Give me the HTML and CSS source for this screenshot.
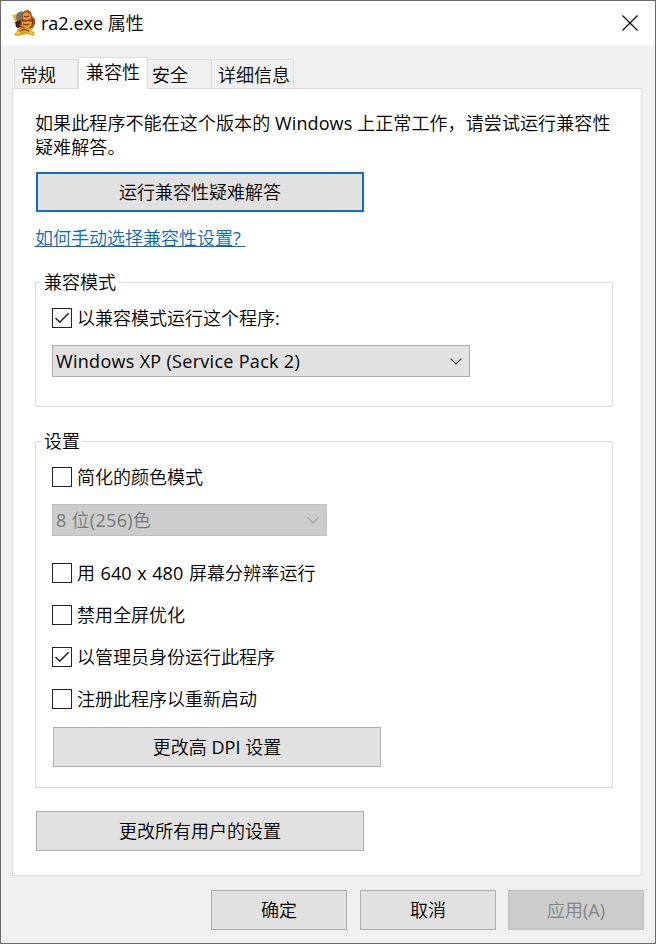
FILE: index.html
```html
<!DOCTYPE html>
<html lang="zh-CN">
  <head>
    <meta charset="utf-8">
    <title>ra2.exe 属性</title>
    <link rel="stylesheet" href="styles.css">
  </head>
  <body>
    <div class="window">
      <header class="titlebar">
        <svg class="app-icon" width="25" height="26" viewBox="0 0 25 26">
          <path d="M1 5l6-1 3 4-3 4-3-1z" fill="#e3b21c"/>
          <path d="M6 3l5-2 3 3-2 8-5 1-2-5z" fill="#77726b"/>
          <path d="M4 12l5-2 3 5-3 4-4-2z" fill="#3a1d2c"/>
          <path d="M11 4l2-3 4-1 3 2 1 4 3 3v5l-2 4-5 2-6-1-3-4 3-4z" fill="#a8501a"/>
          <path d="M12 4l3-2 4 2 1 4-3 3-5-2zM11 12l4-1 6 1-1 4-5 2-4-2z" fill="#e39a35"/>
          <path d="M8 17l4 1 6-1 2 3 4 3-2 3-5-2-5 1-6 1-3-1 3-4z" fill="#dfa51e"/>
          <path d="M13 6l2 1 3-1M11 10l3 1 5-1M12 14l3 1 3-1M9 21l4-2 5 2M21 9l1 5" fill="none" stroke="#6d2c12" stroke-width="1.1"/>
          <path d="M5 24l4-2M19 22l3 2" stroke="#f6d83c" stroke-width="1.5"/>
        </svg>
        <h1>ra2.exe 属性</h1>
        <svg class="close" width="16" height="16" viewBox="0 0 16 16">
          <path d="M.5.5l15 15M15.5.5l-15 15" stroke="#000" stroke-width="1.1"/>
        </svg>
      </header>

      <nav class="tabs">
        <a class="tab general">常规</a>
        <a class="tab active">兼容性</a>
        <a class="tab security">安全</a>
        <a class="tab details">详细信息</a>
      </nav>

      <main class="panel">
        <p class="intro">如果此程序不能在这个版本的 Windows 上正常工作，请尝试运行兼容性疑难解答。</p>
        <button class="btn wide default">运行兼容性疑难解答</button>
        <a class="help">如何手动选择兼容性设置?&nbsp;</a>

        <fieldset class="mode">
          <legend>兼容模式</legend>
          <label class="check">
            <span class="box"><svg width="18" height="18" viewBox="0 0 18 18"><path d="M2.5 9l4.2 4.2 9-9"/></svg></span>
            以兼容模式运行这个程序:
          </label>
          <div class="select">
            <span>Windows XP (Service Pack 2)</span>
            <svg width="12" height="7" viewBox="0 0 12 7"><path d="M.7.7L6 6 11.3.7"/></svg>
          </div>
        </fieldset>

        <fieldset class="settings">
          <legend>设置</legend>
          <label class="check"><span class="box"></span>简化的颜色模式</label>
          <div class="select disabled">
            <span>8 位(256)色</span>
            <svg width="12" height="7" viewBox="0 0 12 7"><path d="M.7.7L6 6 11.3.7"/></svg>
          </div>
          <div class="options">
            <label class="check resolution"><span class="box"></span>用 640 x 480 屏幕分辨率运行</label>
            <label class="check"><span class="box"></span>禁用全屏优化</label>
            <label class="check">
              <span class="box"><svg width="18" height="18" viewBox="0 0 18 18"><path d="M2.5 9l4.2 4.2 9-9"/></svg></span>
              以管理员身份运行此程序
            </label>
            <label class="check"><span class="box"></span>注册此程序以重新启动</label>
          </div>
          <button class="btn wide">更改高 DPI 设置</button>
        </fieldset>

        <button class="btn wide">更改所有用户的设置</button>
      </main>

      <footer class="footer">
        <button class="btn ok">确定</button>
        <button class="btn">取消</button>
        <button class="btn" disabled>应用(A)</button>
      </footer>
    </div>
  </body>
</html>
```
FILE: styles.css
```css
* {
  box-sizing: border-box;
}

body {
  margin: 0;
  font-family: "Open Sans", "Noto Sans CJK SC DemiLight", "Noto Sans CJK SC", sans-serif;
  font-size: 18px;
  line-height: 24px;
  color: #000;
}

.window {
  width: 656px;
  height: 944px;
  border: 1px solid #6b696b;
  background: #f0f0f0;
  overflow: hidden;
}

.titlebar {
  display: flex;
  align-items: center;
  height: 44px;
  padding: 0 17px 1px 10px;
  background: #fff;
}

.titlebar h1 {
  flex: 1;
  margin: 0 0 0 5px;
  font-size: 18px;
  font-weight: inherit;
}

.tabs {
  display: flex;
  align-items: flex-end;
  height: 43px;
  padding-left: 13px;
}

.tab {
  height: 29px;
  padding: 3px 0 0 5px;
  border: 1px solid #dcdcdc;
  border-bottom: none;
  border-left: none;
  white-space: nowrap;
}

.general {
  width: 64px;
  border-left: 1px solid #dcdcdc;
}

.security {
  width: 64px;
  padding-left: 4px;
}

.details {
  width: 82px;
  padding-left: 6px;
}

.tab.active {
  width: 70px;
  height: 32px;
  margin-bottom: -1px;
  padding: 2px 0 0 7px;
  border-left: 1px solid #dcdcdc;
  background: #fff;
  z-index: 1;
}

.panel {
  width: 630px;
  height: 788px;
  margin-left: 11px;
  padding: 22px 28px 0 22px;
  border: 1px solid #dcdcdc;
  background: #fff;
}

.intro {
  margin: 0 -4px 13px 0;
  letter-spacing: 0.1px;
}

.btn {
  display: block;
  width: 136px;
  height: 40px;
  padding: 0;
  border: 1px solid #adadad;
  background: #e1e1e1;
  color: #000;
  font: inherit;
}

.btn.wide {
  width: 328px;
  margin-left: 1px;
}

.btn.default {
  border: 2px solid #0f6fbf;
}

.btn:disabled {
  border-color: #bfbfbf;
  background: #ccc;
  color: #838383;
}

.help {
  display: block;
  width: 214px;
  margin-top: 14px;
  margin-bottom: 20px;
  color: #0b68bb;
  text-decoration: underline;
  white-space: nowrap;
}

fieldset {
  min-width: 0;
  margin: 0;
  padding: 0 16px;
  border: 1px solid #dcdcdc;
}

legend {
  margin-left: -11px;
  padding: 0 2px 0 3px;
}

.mode {
  height: 137px;
}

.settings {
  height: 359px;
  margin: 22px 0 23px;
}

.check {
  display: flex;
  align-items: center;
  gap: 5px;
  height: 20px;
}

.mode .check,
.settings > .check {
  margin-top: 14px;
}

.resolution {
  letter-spacing: 0.1px;
  word-spacing: 0.7px;
}

.box {
  width: 20px;
  height: 20px;
  border: 1px solid #2b1f26;
  background: #fff;
}

.box svg {
  display: block;
}

.box path {
  fill: none;
  stroke: #2b1f26;
  stroke-width: 1.6;
}

.select {
  display: flex;
  align-items: center;
  justify-content: space-between;
  width: 418px;
  height: 32px;
  margin-top: 17px;
  padding: 0 7px 0 3px;
  border: 1px solid #adadad;
  background: #e1e1e1;
  letter-spacing: 0.3px;
}

.select path {
  fill: none;
  stroke: #333;
  stroke-width: 1.2;
}

.select.disabled {
  width: 275px;
  border-color: #bfbfbf;
  background: #ccc;
  color: #777;
}

.select.disabled path {
  stroke: #a0a0a0;
}

.options {
  display: flex;
  flex-direction: column;
  gap: 22px;
  margin: 27px 0 18px;
}

.footer {
  display: flex;
  justify-content: flex-end;
  gap: 12px;
  padding: 14px 11px 0 0;
}

.ok {
  margin-right: 1px;
}
```
